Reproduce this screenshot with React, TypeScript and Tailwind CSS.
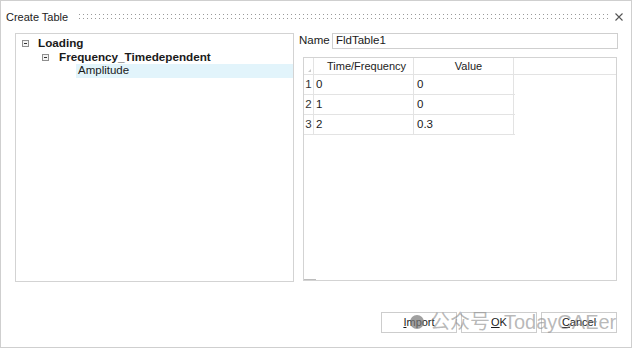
import React from "react";

const FONT = "font-['Liberation_Sans',Arial,sans-serif]";

// Small boxed "minus" used by the tree's expanded nodes.
function Expander() {
  return (
    <span className="flex h-[7px] w-[7px] shrink-0 items-center justify-center border border-[#8f8f8f] bg-[#f4f4f4]">
      <span className="h-px w-[3px] bg-[#333]" />
    </span>
  );
}

function GripDots() {
  return (
    <svg className="h-[8px] flex-1" preserveAspectRatio="none">
      <defs>
        <pattern id="grip" width="4" height="4" patternUnits="userSpaceOnUse">
          <rect x="1" y="1" width="1" height="1" fill="#9a9a9a" />
        </pattern>
      </defs>
      <rect x="0" y="0" width="100%" height="8" fill="url(#grip)" />
    </svg>
  );
}

const ROWS = [
  ["1", "0", "0"],
  ["2", "1", "0"],
  ["3", "2", "0.3"],
];

function Button({ first, rest }: { first: string; rest: string }) {
  return (
    <button className="flex h-[21px] w-[76px] items-center justify-center border border-[#cdcdcd] bg-white text-[11px] text-[#1a1a1a]">
      <span className="underline underline-offset-1">{first}</span>
      {rest}
    </button>
  );
}

export default function App() {
  return (
    <div
      className={`relative flex h-[348px] w-[632px] flex-col border border-[#cfcfcf] bg-white text-[#1a1a1a] ${FONT}`}
    >
      {/* Title bar */}
      <div className="flex h-[32px] items-center pl-[5px] pr-[8px]">
        <span className="text-[11px] leading-none text-[#222]">Create Table</span>
        <div className="ml-[10px] mr-[6px] flex flex-1 items-center">
          <GripDots />
        </div>
        <svg width="8" height="8" viewBox="0 0 8 8" className="shrink-0">
          <path d="M0.5 0.5 L7.5 7.5 M7.5 0.5 L0.5 7.5" stroke="#555" strokeWidth="1.1" />
        </svg>
      </div>

      {/* Body */}
      <div className="flex pl-[14px]">
        {/* Tree */}
        <div className="flex h-[249px] w-[279px] shrink-0 flex-col border border-[#d3d3d3] pt-[2px]">
          <div className="flex h-[14px] items-center pl-[6px]">
            <Expander />
            <span className="ml-[9px] text-[11.7px] font-bold leading-none">Loading</span>
          </div>
          <div className="flex h-[14px] items-center pl-[26px]">
            <Expander />
            <span className="ml-[10px] text-[11.7px] font-bold leading-none">
              Frequency_Timedependent
            </span>
          </div>
          <div className="ml-[60px] flex h-[14px] items-center bg-[#e2f4fb] pl-[2px]">
            <span className="text-[11.5px] leading-none">Amplitude</span>
          </div>
        </div>

        {/* Right column */}
        <div className="ml-[5px] flex w-[319px] flex-col">
          <div className="flex h-[16px] items-center">
            <span className="w-[33px] text-[11.5px] leading-none">Name</span>
            <div className="flex h-[16px] w-[286px] items-center border border-[#cfcfcf] pl-[3px] text-[11.5px] leading-none">
              FldTable1
            </div>
          </div>

          <div className="ml-[4px] mt-[8px] flex h-[224px] w-[314px] flex-col border border-[#d3d3d3]">
            {/* Header */}
            <div className="flex h-[17px] border-b border-[#e3e3e3] text-[11px] text-[#222]">
              <div className="relative w-[10px] border-r border-[#e3e3e3]">
                <span className="absolute bottom-[2px] right-[2px] h-0 w-0 border-b-[3px] border-l-[3px] border-b-[#c8c8c8] border-l-transparent" />
              </div>
              <div className="flex w-[100px] items-center justify-center border-r border-[#e3e3e3] pl-[6px]">
                Time/Frequency
              </div>
              <div className="flex w-[100px] items-center justify-center border-r border-[#e3e3e3] pl-[10px]">
                Value
              </div>
              <div className="flex-1" />
            </div>
            {ROWS.map(([n, t, v]) => (
              <div key={n} className="flex h-[20px] w-[211px] border-b border-[#e3e3e3] text-[11.5px]">
                <div className="flex w-[10px] items-center justify-center border-r border-[#e3e3e3] text-[#333]">
                  {n}
                </div>
                <div className="flex w-[100px] items-center border-r border-[#e3e3e3] pl-[2px]">
                  {t}
                </div>
                <div className="flex w-[100px] items-center border-r border-[#e3e3e3] pl-[3px]">
                  {v}
                </div>
              </div>
            ))}
            <div className="flex-1" />
            <div className="h-px w-[12px] bg-[#bdbdbd]" />
          </div>
        </div>
      </div>

      {/* Buttons */}
      <div className="mt-auto flex justify-end gap-[4px] pb-[14px] pr-[14px]">
        <Button first="I" rest="mport" />
        <Button first="O" rest="K" />
        <Button first="C" rest="ancel" />
      </div>

      {/* Watermark */}
      <div className="pointer-events-none absolute left-[409px] top-[311px] flex items-center text-[20px] leading-none text-[#8a8a8a]/60 font-['Liberation_Sans','Noto_Sans_CJK_SC',sans-serif]">
        <span className="mr-[6px] h-[14px] w-[14px] rounded-full bg-[#777]/70" />
        <span>公众号</span>
        <span className="ml-[14px]">TodayCAEer</span>
      </div>
    </div>
  );
}
